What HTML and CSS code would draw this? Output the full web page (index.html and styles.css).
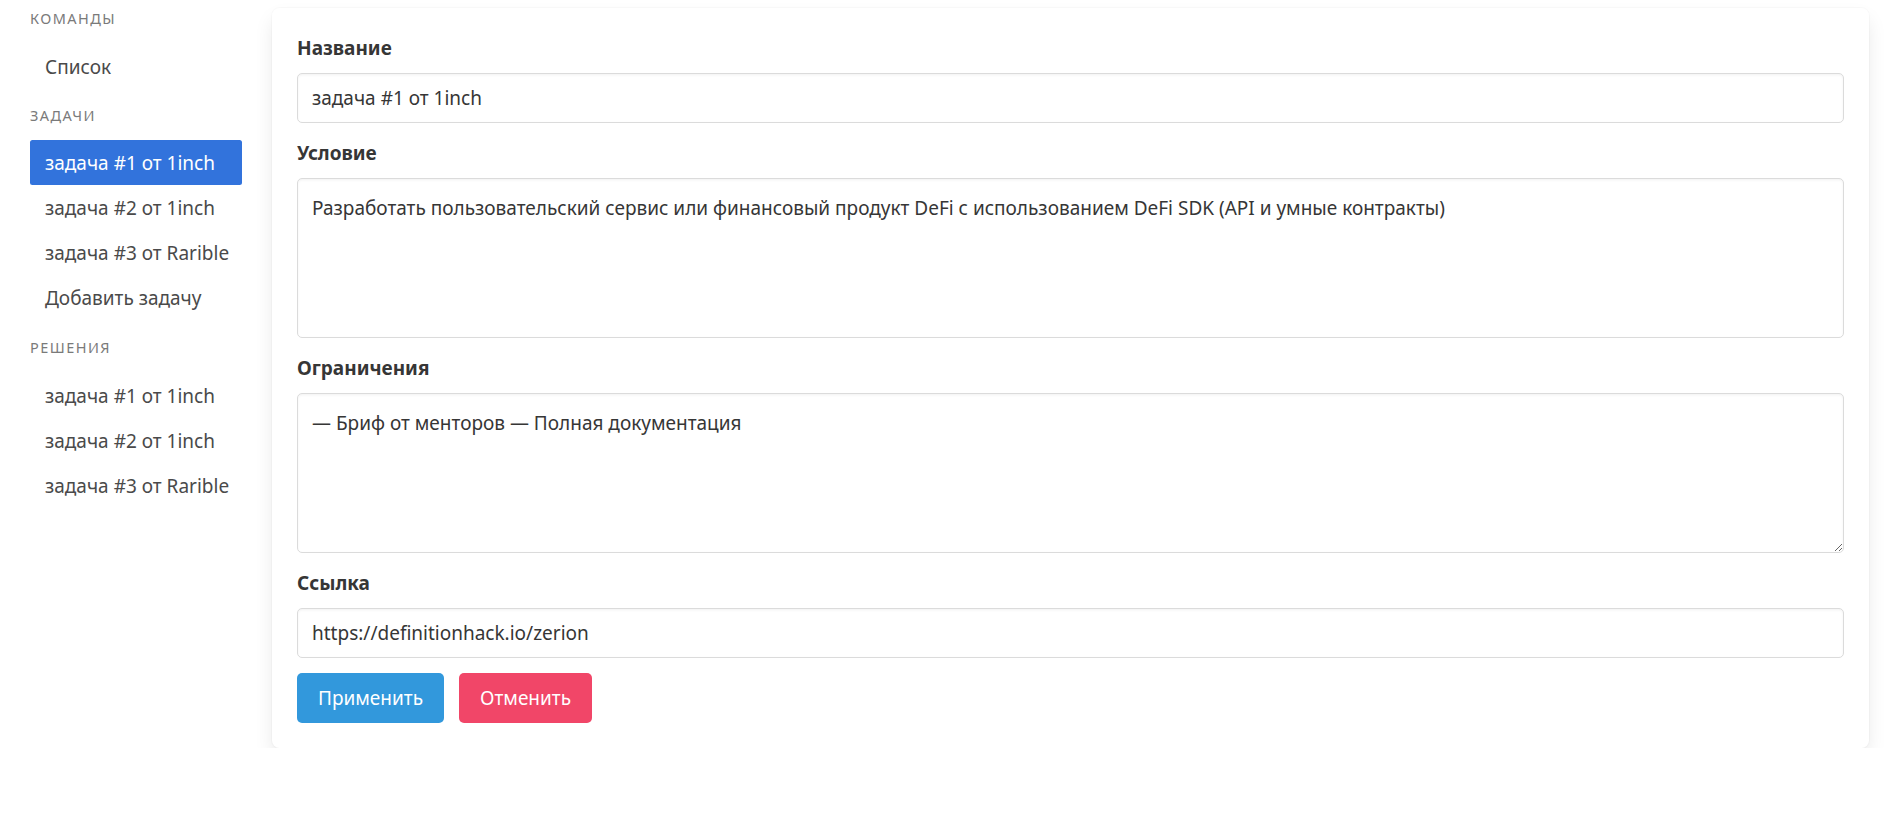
FILE: index.html
```html
<!DOCTYPE html>
<html lang="ru">
<head>
<meta charset="utf-8">
<title>Задачи</title>
<link rel="stylesheet" href="styles.css">
</head>
<body>
<div class="layout">
  <aside class="menu">
    <p class="menu-label first">Команды</p>
    <ul class="menu-list first-list">
      <li><a href="#">Список</a></li>
    </ul>
    <p class="menu-label after-first">Задачи</p>
    <ul class="menu-list">
      <li><a href="#" class="is-active">задача #1 от 1inch</a></li>
      <li><a href="#">задача #2 от 1inch</a></li>
      <li><a href="#">задача #3 от Rarible</a></li>
      <li><a href="#">Добавить задачу</a></li>
    </ul>
    <p class="menu-label">Решения</p>
    <ul class="menu-list">
      <li><a href="#">задача #1 от 1inch</a></li>
      <li><a href="#">задача #2 от 1inch</a></li>
      <li><a href="#">задача #3 от Rarible</a></li>
    </ul>
  </aside>
  <main class="content">
    <form class="box">
      <div class="field">
        <label class="label">Название</label>
        <input class="input" type="text" value="задача #1 от 1inch">
      </div>
      <div class="field">
        <label class="label">Условие</label>
        <textarea class="textarea fixed">Разработать пользовательский сервис или финансовый продукт DeFi с использованием DeFi SDK (API и умные контракты)</textarea>
      </div>
      <div class="field">
        <label class="label">Ограничения</label>
        <textarea class="textarea">— Бриф от менторов — Полная документация</textarea>
      </div>
      <div class="field">
        <label class="label">Ссылка</label>
        <input class="input" type="text" value="https://definitionhack.io/zerion">
      </div>
      <div class="buttons">
        <button type="button" class="button info">Применить</button>
        <button type="button" class="button danger">Отменить</button>
      </div>
    </form>
  </main>
</div>
</body>
</html>
```

FILE: styles.css
```css
* { box-sizing: border-box; }
html, body {
  margin: 0;
  background: #fff;
  font-family: "Noto Sans", "Open Sans", sans-serif;
  font-size: 19px;
  color: #4a4a4a;
}
.layout {
  display: flex;
  align-items: flex-start;
  gap: 30px;
  padding: 6px 20px 0 30px;
}
.menu {
  width: 212px;
  flex: none;
}
.menu-label {
  margin: 15px 0 15px;
  padding-top: 1px;
  height: 22.5px;
  font-size: 14.5px;
  line-height: 22.5px;
  letter-spacing: 0.1em;
  text-transform: uppercase;
  color: #7a7a7a;
}
.menu-label.first { margin-top: 0; }
.menu-list {
  list-style: none;
  margin: 0;
  padding: 0;
  line-height: 25px;
}
.menu-list.first-list { margin-top: 2px; }
.menu-label.after-first { margin-top: 14px; }
.menu-list a {
  display: block;
  padding: 11px 15px 9px;
  border-radius: 2.5px;
  color: #4a4a4a;
  text-decoration: none;
  white-space: nowrap;
}
.menu-list a.is-active {
  background: #3273dc;
  color: #fff;
}
.content { flex: 1; min-width: 0; padding-top: 2px; }
.box {
  background: #fff;
  border-radius: 7.5px;
  box-shadow: 0 10px 20px -2.5px rgba(10,10,10,.1), 0 0 0 1px rgba(10,10,10,.02);
  padding: 25px;
  display: flex;
  flex-direction: column;
  gap: 15px;
}
.field { display: flex; flex-direction: column; }
.label {
  color: #363636;
  font-weight: 700;
  line-height: 30px;
  margin-bottom: 10px;
}
.input, .textarea {
  font-family: inherit;
  font-size: 19px;
  color: #363636;
  background: #fff;
  border: 1px solid #dbdbdb;
  border-radius: 5px;
  box-shadow: inset 0 1.25px 2.5px rgba(10,10,10,.05);
  width: 100%;
  outline: none;
}
.input {
  height: 50px;
  padding: 0 14px;
  line-height: 30px;
}
.textarea {
  height: 160px;
  padding: 14px;
  line-height: 30px;
  resize: vertical;
  display: block;
}
.textarea.fixed { resize: none; }
.buttons { display: flex; gap: 15px; }
.button {
  font-family: inherit;
  font-size: 19px;
  height: 50px;
  line-height: 30px;
  padding: 0 20px;
  border: 1px solid transparent;
  border-radius: 5px;
  color: #fff;
  cursor: pointer;
}
.button.info { background: #3298dc; }
.button.danger { background: #f14668; }
```
